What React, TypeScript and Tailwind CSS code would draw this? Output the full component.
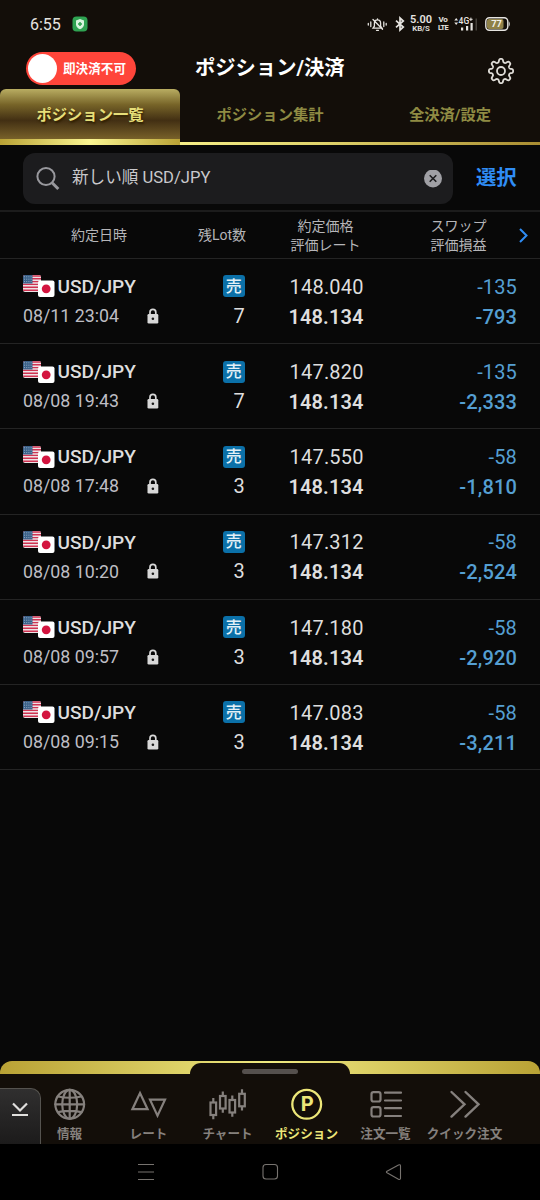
import React from "react";

type Position = { date: string; lots: number; price: string; swap: string; pl: string };

const positions: Position[] = [
  { date: "08/11 23:04", lots: 7, price: "148.040", swap: "-135", pl: "-793" },
  { date: "08/08 19:43", lots: 7, price: "147.820", swap: "-135", pl: "-2,333" },
  { date: "08/08 17:48", lots: 3, price: "147.550", swap: "-58", pl: "-1,810" },
  { date: "08/08 10:20", lots: 3, price: "147.312", swap: "-58", pl: "-2,524" },
  { date: "08/08 09:57", lots: 3, price: "147.180", swap: "-58", pl: "-2,920" },
  { date: "08/08 09:15", lots: 3, price: "147.083", swap: "-58", pl: "-3,211" },
];

const currentRate = "148.134";

function StatusBar() {
  return (
    <div className="flex h-[48px] items-center pl-[30px] text-[#e6e4e0]">
      <span className="w-[42px] pt-[1px] text-[16px] leading-[20px]">6:55</span>
      <svg width="16" height="16" viewBox="0 0 16 16">
        <rect x="0.5" y="0.5" width="15" height="15" rx="4" fill="#2fa352" />
        <path d="M8 3 12 4.6V8.2c0 2.4-1.700 4.200-4 5.100-2.300-.900-4-2.700-4-5.100V4.600Z" fill="#d9f6df" />
        <path d="M8 6v4M6 8h4" stroke="#2fa352" strokeWidth="1.500" />
      </svg>
      <svg className="ml-[279px]" width="21" height="16" viewBox="0 0 21 16" fill="none" stroke="#e6e4e0" strokeWidth="1.300" strokeLinecap="round">
        <path d="M1.300 7.500v1.500M3.800 6v4.500M19.200 7.500v1.500M16.800 6v4.500" />
        <path d="m6 12.200 1.400-2V7.300c0-2 1.300-3.500 3.100-3.500s3.100 1.500 3.100 3.500v2.900l1.400 2ZM10.500 3.800V2.800M9.500 14.300h2M6 3.500l9.500 9.800" />
      </svg>
      <svg className="ml-[7px]" width="10" height="16" viewBox="0 0 10 16" fill="none" stroke="#e6e4e0" strokeWidth="1.700">
        <path d="M1 4.700 8.300 11 5 14V2l3.300 3L1 11.300" />
      </svg>
      <div className="ml-[5px] flex w-[22px] flex-col items-center font-semibold">
        <span className="text-[11px] leading-[9px]">5.00</span>
        <span className="pt-[1px] text-[7.800px] leading-[8px]">KB/S</span>
      </div>
      <div className="ml-[6px] flex w-[10px] flex-col items-center font-bold">
        <span className="text-[8px] leading-[8px] tracking-[-0.300px]">Vo</span>
        <span className="text-[7.500px] leading-[8px] tracking-[-0.700px]">LTE</span>
      </div>
      <svg className="ml-[6px]" width="24" height="16" viewBox="0 0 24 16" fill="#e6e4e0">
        <path d="M0.300 4.600 2.200 2l1.900 2.600ZM0.300 6.400 2.200 9l1.900-2.600Z" />
        <text x="4.600" y="7.800" fontSize="8.500" fontWeight="500" fontFamily="Roboto, sans-serif">4G</text>
        <path d="M15.200 3.300h3.400M16.900 1.600V5" stroke="#e6e4e0" strokeWidth="1" />
        <path d="M7 11.500h2.200v3H7zM12 10h2.200v4.500H12zM16.500 7h2.200v7.500h-2.200z" />
        <path d="M21.500 2.500H23v12h-1.500z" fill="#44403a" />
      </svg>
      <svg className="ml-[7px]" width="26" height="14" viewBox="0 0 26 14">
        <rect x="0.800" y="0.800" width="22" height="12.400" rx="3.600" fill="none" stroke="#e6e4e0" strokeWidth="1.400" />
        <rect x="2" y="2" width="16.500" height="10" rx="2" fill="#8f8148" />
        <path d="M23.800 4.500c1.300.500 1.300 4.500 0 5z" fill="#e6e4e0" />
        <text x="11.600" y="10.300" textAnchor="middle" fontSize="9.300" fontWeight="700" fill="#f2f0e8" fontFamily="Roboto, sans-serif">77</text>
      </svg>
    </div>
  );
}

const gearPath =
  Array.from({ length: 160 }, (_, i) => {
    const a = (i / 160) * Math.PI * 2;
    const r = 10.5 + 1.7 * Math.tanh(1.9 * Math.cos(8 * a));
    return `${i ? "L" : "M"}${(14 + r * Math.sin(a)).toFixed(2)} ${(14 - r * Math.cos(a)).toFixed(2)}`;
  }).join("") + "Z";

function Gear() {
  return (
    <svg width="28" height="28" viewBox="0 0 28 28" fill="none" stroke="#dedbd6" strokeWidth="1.800" strokeLinejoin="round">
      <path d={gearPath} />
      <circle cx="14" cy="14" r="4" />
    </svg>
  );
}

function Flags() {
  return (
    <svg width="32" height="23" viewBox="0 0 32 23">
      <defs>
        <clipPath id="usFlag"><rect x="0" y="0" width="18" height="17" rx="2" /></clipPath>
      </defs>
      <g clipPath="url(#usFlag)">
        <path d="M0 0h18v17H0z" fill="#eee2e5" />
        <path d="M0 1h18M0 3.800h18M0 6.600h18M0 9.400h18M0 12.200h18M0 15.300h18" stroke="#cf3352" strokeWidth="1.400" />
        <path d="M0 0h9.500v8.500H0z" fill="#3a6189" />
        <path d="M1 1.800h8M1 4.200h8M1 6.600h8" stroke="#a9bed1" strokeWidth="0.800" strokeDasharray="1 1.200" />
      </g>
      <rect x="15" y="5.500" width="16.500" height="16.500" rx="2" fill="#fff" />
      <circle cx="23.200" cy="13.800" r="4.400" fill="#d3143f" />
    </svg>
  );
}

function Lock() {
  return (
    <svg width="12" height="16" viewBox="0 0 12 16">
      <path d="M3 7V4.300a2.900 2.900 0 0 1 5.800 0V7" fill="none" stroke="#d8d8d8" strokeWidth="1.700" />
      <rect x="0.500" y="6" width="10.800" height="9.500" rx="1.300" fill="#d8d8d8" />
      <circle cx="5.900" cy="10.700" r="1.300" fill="#1a1a1a" />
    </svg>
  );
}

function PositionRow({ p }: { p: Position }) {
  return (
    <div className="flex h-[85.200px] border-b border-[#242424] pt-[12.900px] pr-[23px] pl-[23px] text-[#dedede]">
      <div className="w-[140px]">
        <div className="flex h-[30px] items-center">
          <div className="w-[34.500px]"><Flags /></div>
          <span className="pt-[1px] text-[19.100px] font-medium">USD/JPY</span>
        </div>
        <div className="flex h-[28px] items-center">
          <span className="w-[124px] pt-[1px] text-[17.800px] text-[#bebec4]">{p.date}</span>
          <Lock />
        </div>
      </div>
      <div className="flex w-[81.700px] flex-col items-end">
        <div className="flex h-[29px] items-center">
          <span className="flex h-[22px] w-[22px] items-center justify-center rounded-[3px] bg-[#0b70a8] pt-[1px] text-[16px] leading-[22px] font-medium text-[#e4f0f6]">売</span>
        </div>
        <span className="h-[30px] text-[20px] leading-[30px]">{p.lots}</span>
      </div>
      <div className="flex w-[119px] flex-col items-end text-[20px] leading-[30px] tracking-[0.150px]">
        <span className="tracking-[0.200px]">{p.price}</span>
        <span className="font-semibold">{currentRate}</span>
      </div>
      <div className="flex flex-1 flex-col items-end text-[20px] leading-[30px] tracking-[0.150px] text-[#559fd2]">
        <span>{p.swap}</span>
        <span className="font-medium">{p.pl}</span>
      </div>
    </div>
  );
}

function NavItem({ label, active, children }: { label: string; active?: boolean; children: React.ReactNode }) {
  return (
    <div className={active ? "flex w-[79px] flex-col items-center text-[#ece678]" : "flex w-[79px] flex-col items-center text-[#85807d]"}>
      <svg width="40" height="34" viewBox="0 0 40 34" fill="none" stroke="currentColor" strokeWidth="2.200" strokeLinejoin="round" strokeLinecap="round">
        {children}
      </svg>
      <span className="mt-[4px] text-[12.600px] leading-[18px] font-bold whitespace-nowrap">{label}</span>
    </div>
  );
}

function Candle({ x, y }: { x: number; y: number }) {
  return (
    <g strokeLinejoin="miter" strokeLinecap="butt">
      <rect x={x - 2.8} y={y + 4.5} width="5.6" height="12.500" />
      <path d={`M${x} ${y}v4.500M${x} ${y + 17}v4.300`} />
    </g>
  );
}

function BottomNav() {
  return (
    <div className="flex h-[83px] flex-col overflow-hidden rounded-t-[12px] bg-[#130e09]">
      <div className="flex h-[13px] shrink-0 justify-center bg-[linear-gradient(90deg,#b9a235,#efe980_50%,#b9a235)] pt-[1.500px]">
        <div className="flex w-[160px] justify-center rounded-t-[12px] bg-[#130e09] pt-[6px]">
          <div className="h-[5px] w-[56px] rounded-full bg-[#55504d]" />
        </div>
      </div>
      <div className="flex h-[70px]">
        <div className="flex h-[56px] w-[41px] shrink-0 justify-center self-end rounded-tr-[10px] border-t border-r border-[#55534f] bg-[linear-gradient(#302f2f,#1c1b1b)] pt-[13px]">
          <svg width="18" height="16" viewBox="0 0 18 16" fill="none" stroke="#e0dfdd" strokeWidth="2.200">
            <path d="m2 1.500 7 7 7-7M1 13h16" />
          </svg>
        </div>
        <div className="-ml-[11px] flex pt-[13px]">
          <NavItem label="情報">
            <circle cx="19.700" cy="17.300" r="14.400" />
            <ellipse cx="19.700" cy="17.300" rx="7.500" ry="14.400" />
            <path d="M19.700 2.900v28.800M5.300 17.300h28.800M8 9.500q11.700 2.500 23.400 0M8 25.100q11.700-2.500 23.400 0" />
          </NavItem>
          <NavItem label="レート">
            <path d="m11 6 7.600 16.200H3.400ZM21 12.700h15L28.500 28.600Z" strokeLinejoin="miter" />
          </NavItem>
          <NavItem label="チャート">
            <Candle x={5.3} y={11} />
            <Candle x={14.8} y={4.5} />
            <Candle x={24.3} y={8.5} />
            <Candle x={34} y={2.3} />
          </NavItem>
          <NavItem label="ポジション" active>
            <circle cx="19.700" cy="17.300" r="14.400" strokeWidth="2.300" />
            <text x="20.200" y="24.300" textAnchor="middle" stroke="none" fill="currentColor" fontSize="20" fontWeight="700" fontFamily="Inter, sans-serif">P</text>
          </NavItem>
          <NavItem label="注文一覧">
            <rect x="5.500" y="5.200" width="9" height="9.300" rx="2" />
            <rect x="5.500" y="20.200" width="9" height="9.300" rx="2" />
            <path d="M19 5.700h16M19 13.500h16M19 21.200h16M19 29h16" />
          </NavItem>
          <NavItem label="クイック注文">
            <path d="m6.500 5 13 12.300-13 12.300M20.500 5l13 12.300-13 12.300" strokeWidth="2.400" strokeLinejoin="miter" />
          </NavItem>
        </div>
      </div>
    </div>
  );
}

export default function App() {
  return (
    <div className="flex h-[1200px] w-[540px] flex-col overflow-hidden bg-[#080808] font-[Roboto,'Noto_Sans_CJK_JP',sans-serif]">
      <header className="flex h-[145px] flex-col bg-[#130e09]">
        <StatusBar />
        <div className="flex h-[41px] shrink-0 pt-[4px] pr-[25px] pl-[26px]">
          <div className="flex h-[33px] w-[110px] items-center rounded-full bg-[#ff453a] pl-[2px]">
            <div className="h-[29px] w-[29px] rounded-full bg-white" />
            <span className="ml-[6px] pt-[1px] text-[12.600px] font-bold whitespace-nowrap text-white">即決済不可</span>
          </div>
          <h1 className="ml-[59px] w-[200px] text-[20.300px] leading-[33px] font-bold whitespace-nowrap text-white">ポジション/決済</h1>
          <div className="ml-auto flex-none pt-[5px]"><Gear /></div>
        </div>
        <div className="flex h-[56px] text-[15.300px] font-bold text-[#8f8b43]">
          <div className="flex w-[180px] flex-col overflow-hidden rounded-t-[6px] bg-[linear-gradient(#b9ad62,#776428_28%,#422f13_56%,#79622a_90%)] text-[#e6df79]">
            <div className="flex h-[50px] items-center justify-center pt-[2px] text-shadow-[1px_2px_2px_#302000]">ポジション一覧</div>
            <div className="h-[6px] bg-[linear-gradient(90deg,#b9a235,#fbf692_50%,#b9a235)]" />
          </div>
          <div className="flex w-[360px] flex-col">
            <div className="flex h-[53px] items-center">
              <span className="w-[180px] pb-[1px] text-center">ポジション集計</span>
              <span className="w-[180px] pb-[1px] text-center">全決済/設定</span>
            </div>
            <div className="h-[3px] bg-[linear-gradient(90deg,#f5ee87,#dfd36b_40%,#a98d32)]" />
          </div>
        </div>
      </header>

      <div className="flex h-[67px] shrink-0 border-b-2 border-[#1c1c1c] pt-[8px] pl-[23px]">
        <div className="flex h-[51px] w-[430px] items-center rounded-[12px] bg-[#1c1c1e] pr-[11px] pl-[13px]">
          <svg width="26" height="26" viewBox="0 0 26 26" fill="none" stroke="#98989d">
            <circle cx="10" cy="10.500" r="8.600" strokeWidth="2" />
            <path d="m16.300 17 6 6" strokeWidth="3" />
          </svg>
          <span className="ml-[10px] pb-[1px] text-[16.600px] text-[#c9c9cc]">新しい順 USD/JPY</span>
          <svg className="ml-auto" width="18" height="18" viewBox="0 0 18 18">
            <circle cx="9" cy="8.500" r="9" fill="#a0a0a5" />
            <path d="m5.700 5.200 6.600 6.600M12.300 5.200l-6.600 6.600" stroke="#1c1c1e" strokeWidth="1.600" />
          </svg>
        </div>
        <span className="ml-[23px] text-[20.300px] leading-[50px] font-bold text-[#2f8df5]">選択</span>
      </div>

      <div className="flex h-[47px] shrink-0 items-center border-b border-[#242424] pt-[1px] text-center text-[14px] leading-[18.500px] text-[#b5b5b8]">
        <span className="w-[198px]">約定日時</span>
        <span className="w-[48px] whitespace-nowrap">残Lot数</span>
        <span className="w-[159px]">約定価格<br />評価レート</span>
        <span className="w-[107px]">スワップ<br />評価損益</span>
        <svg className="ml-[6px]" width="12" height="16" viewBox="0 0 12 16" fill="none" stroke="#2f8df5" strokeWidth="2">
          <path d="m2 1 6.500 6.500L2 14" />
        </svg>
      </div>

      <main className="flex-1">
        {positions.map((p) => <PositionRow key={p.date} p={p} />)}
      </main>

      <BottomNav />
      <footer className="flex h-[56px] shrink-0 items-center bg-black pl-[137px]">
        <svg width="266" height="18" viewBox="0 0 266 18" fill="none" stroke="#77736f" strokeWidth="1.100">
          <path d="M1 1.500h16M1 9h16M1 16.500h16" />
          <rect x="126" y="1.500" width="14.500" height="14.500" rx="3" />
          <path d="M250 8.300c-.800.500-.800 1 0 1.500l11.500 6.400c1 .500 2 .200 2-1V3c0-1.200-1-1.500-2-1Z" />
        </svg>
      </footer>
    </div>
  );
}
